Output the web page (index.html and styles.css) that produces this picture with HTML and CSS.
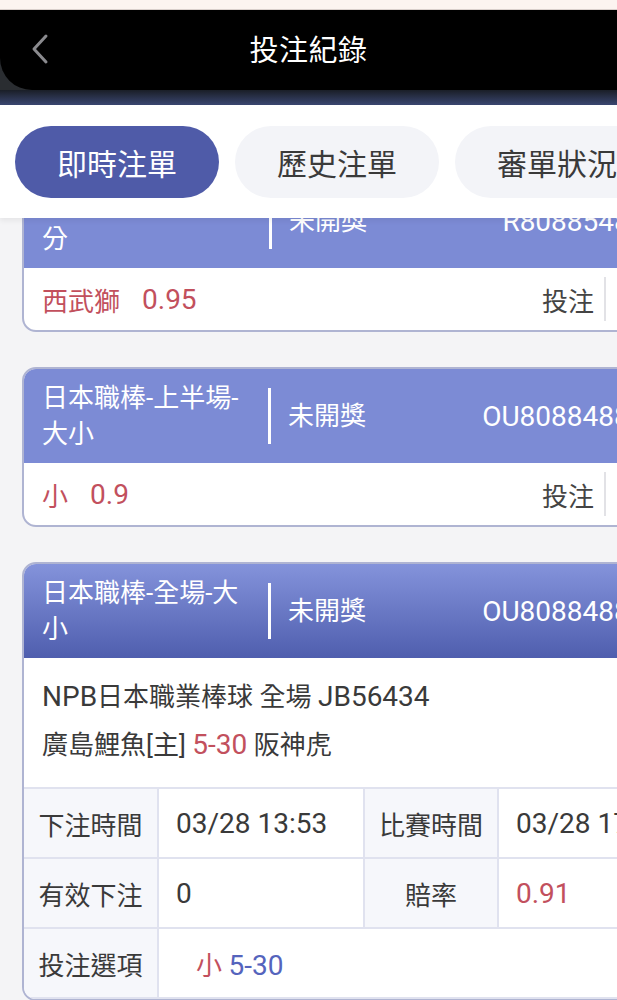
FILE: index.html
```html
<!DOCTYPE html>
<html lang="zh-Hant">
<head>
    <meta charset="UTF-8">
    <meta name="viewport" content="width=device-width, initial-scale=1.0">
    <title>投注紀錄</title>
    <link rel="stylesheet" href="styles.css">
</head>
<body>
    <div class="statusbar"></div>

    <header class="topbar">
        <div class="topbar-inner">
            <svg class="back" width="20" height="32" viewBox="0 0 20 32">
                <polyline points="16,3 4,16 16,29" fill="none" stroke="#8a8a8e" stroke-width="3" stroke-linecap="round" stroke-linejoin="round"/>
            </svg>
            <h1>投注紀錄</h1>
        </div>
        <div class="topbar-glow"></div>
    </header>

    <nav class="tabs">
        <button class="tab active">即時注單</button>
        <button class="tab">歷史注單</button>
        <button class="tab">審單狀況</button>
    </nav>

    <main class="list">
        <section class="card">
            <div class="card-head">
                <div class="game">日本職棒-全場-讓分</div>
                <div class="status">未開獎</div>
                <div class="order">R8088548312</div>
            </div>
            <div class="card-row">
                <span class="pick">西武獅</span>
                <span class="odds">0.95</span>
                <div class="actions">
                    <span class="act">投注</span>
                    <span class="act">明細</span>
                </div>
            </div>
        </section>

        <section class="card">
            <div class="card-head">
                <div class="game">日本職棒-上半場-大小</div>
                <div class="status">未開獎</div>
                <div class="order">OU8088488312</div>
            </div>
            <div class="card-row">
                <span class="pick">小</span>
                <span class="odds">0.9</span>
                <div class="actions">
                    <span class="act">投注</span>
                    <span class="act">明細</span>
                </div>
            </div>
        </section>

        <section class="card card-open">
            <div class="card-head">
                <div class="game">日本職棒-全場-大小</div>
                <div class="status">未開獎</div>
                <div class="order">OU8088488313</div>
            </div>
            <div class="card-info">
                <div><span class="num">NPB</span>日本職業棒球 全場 <span class="num">JB56434</span></div>
                <div>廣島鯉魚[主] <span class="num red">5-30</span> 阪神虎</div>
            </div>
            <table class="detail">
                <colgroup>
                    <col class="w-label">
                    <col class="w-value">
                    <col class="w-label">
                    <col>
                </colgroup>
                <tr>
                    <th>下注時間</th>
                    <td class="num">03/28 13:53</td>
                    <th>比賽時間</th>
                    <td class="num">03/28 17:00</td>
                </tr>
                <tr>
                    <th>有效下注</th>
                    <td class="num">0</td>
                    <th>賠率</th>
                    <td class="num red">0.91</td>
                </tr>
                <tr>
                    <th>投注選項</th>
                    <td class="option" colspan="3"><span class="red">小</span> <span class="num blue">5-30</span></td>
                </tr>
            </table>
        </section>
    </main>
</body>
</html>
```

FILE: styles.css
```css
html, body {
    overflow-x: hidden;
}
body {
    margin: 0;
    width: 617px;
    min-height: 1000px;
    background: #f4f4f6;
    color: #3a3a3a;
    font-family: Roboto, "Noto Sans CJK TC", sans-serif;
}
.statusbar {
    height: 10px;
    background: #fcf4f0;
    border-bottom: 1px solid #d9cfcb;
    box-sizing: border-box;
}
.topbar {
    background: #2a2d31;
}
.topbar-inner {
    height: 80px;
    background: #000;
    border-bottom-left-radius: 32px;
    display: flex;
    align-items: center;
    justify-content: center;
    position: relative;
}
.back {
    position: absolute;
    left: 30px;
    top: 23px;
}
.topbar h1 {
    margin: 0 0 4px;
    color: #fff;
    font-size: 29px;
    font-weight: 400;
    letter-spacing: 0.5px;
}
.topbar-glow {
    height: 15px;
    background: linear-gradient(to bottom, #1a1e27, #3a4670);
}
.tabs {
    position: relative;
    z-index: 2;
    display: flex;
    gap: 16px;
    padding: 21px 0 20px 15px;
    background: #fff;
    box-shadow: 0 3px 5px rgba(0, 0, 0, 0.06);
    overflow: hidden;
}
.tab {
    flex: 0 0 204px;
    height: 72px;
    border: none;
    border-radius: 36px;
    background: #f3f4f8;
    color: #3a3a3a;
    font-family: inherit;
    font-size: 30px;
    padding: 0;
}
.tab.active {
    background: #4f5ba8;
    color: #fff;
}
.list {
    margin-top: -46px;
    padding-left: 22px;
    overflow: hidden;
}
.card {
    width: 673px;
    margin-bottom: 35px;
    background: #fff;
    border: 2px solid #afb4d2;
    border-radius: 14px;
    overflow: hidden;
}
.card-head {
    display: flex;
    align-items: center;
    padding: 11px 20px 11px 18px;
    background: #7c8bd5;
    color: #fff;
    font-size: 26px;
}
.card-open .card-head {
    background: linear-gradient(to bottom, #8493db, #4f5eae);
}
.game {
    width: 215px;
    line-height: 36px;
}
.status {
    width: 195px;
    margin-left: 12px;
    padding-left: 17px;
    height: 56px;
    line-height: 56px;
    border-left: 3px solid #fff;
}
.order {
    flex: 1;
    text-align: right;
    font-size: 28px;
}
.card-row {
    display: flex;
    align-items: center;
    height: 62px;
    padding: 0 19px 0 18px;
    font-size: 26px;
}
.pick, .odds, .red {
    color: #c2505d;
}
.odds {
    margin-left: 22px;
    font-size: 28px;
}
.actions {
    margin-left: auto;
    display: flex;
    align-items: center;
}
.act {
    padding: 0 10px;
    color: #444;
}
.act + .act {
    border-left: 2px solid #e2e2e6;
    line-height: 44px;
}
.blue {
    color: #5564bd;
}
.num {
    font-size: 28px;
}
.card-info {
    padding: 15px 18px 18px;
    font-size: 26px;
    line-height: 48px;
    border-bottom: 2px solid #e0e2ef;
}
.detail {
    width: 100%;
    table-layout: fixed;
    border-collapse: collapse;
    font-size: 26px;
}
.w-label {
    width: 134px;
}
.w-value {
    width: 206px;
}
.detail th, .detail td {
    height: 68px;
    border: 2px solid #e0e2ef;
    padding: 0 0 0 17px;
    white-space: nowrap;
    overflow: hidden;
}
.detail tr:first-child th, .detail tr:first-child td {
    border-top: none;
}
.detail th:first-child {
    border-left: none;
}
.detail th {
    padding: 0;
    background: #f6f7fb;
    font-weight: 400;
    text-align: center;
    color: #3a3a3a;
}
.detail td {
    text-align: left;
    color: #3a3a3a;
}
.detail td.red {
    color: #c2505d;
}
.detail .option {
    padding-left: 37px;
}
```
